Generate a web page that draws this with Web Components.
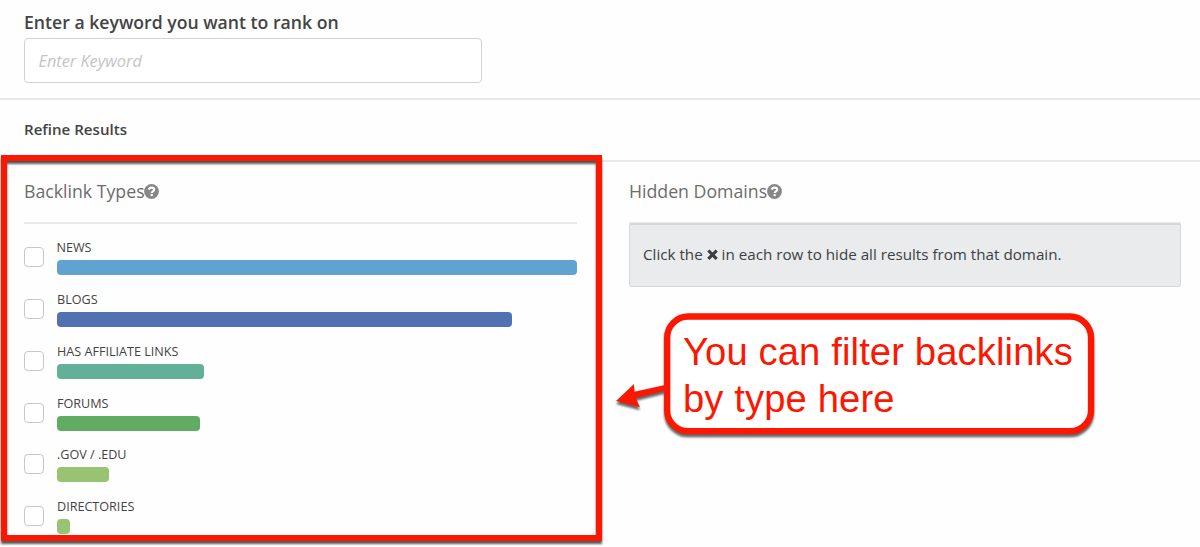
<!DOCTYPE html>
<html lang="en"><head><meta charset="utf-8"><title>Backlinks</title>
<style>html,body{margin:0;height:547px;overflow:hidden;background:#fefefe}</style></head>
<body><backlink-page></backlink-page>
<script>
const define=(name,html,setup)=>customElements.define(name,class extends HTMLElement{
  constructor(){super();this.attachShadow({mode:'open'}).innerHTML=html}
  connectedCallback(){if(setup)setup(this,this.shadowRoot)}
});
define('help-icon',`<style>:host{display:block;width:15px;height:15px;margin:1px 0 0 -.5px}svg{display:block}</style>
<svg width="15" height="15" viewBox="0 0 15 15"><circle cx="7.5" cy="7.5" r="7.4" fill="#878787"/><path d="M4.7 5.7C5.2 4.2 6.2 3.6 7.5 3.6c1.6 0 2.7.8 2.7 2 0 1.8-2.5 1.7-2.5 3.4" fill="none" stroke="#fefefe" stroke-width="2.1"/><rect x="6.6" y="10" width="2.2" height="2.1" fill="#fefefe"/></svg>`);
define('close-icon',`<style>:host{display:inline-block;width:11px;height:11px;vertical-align:0}svg{display:block}</style>
<svg width="11" height="11" viewBox="0 0 11 11"><path d="M2.4 2.6l6.2 6.2M8.6 2.6l-6.2 6.2" stroke="#3c3f42" stroke-width="3.1" stroke-linecap="square"/></svg>`);
define('keyword-field',`<style>:host{display:block;padding:11px 24px 0;height:87px}
.l{font-size:17.65px;font-weight:600;line-height:23px;height:27px;color:#444}
.i{box-sizing:border-box;width:458px;height:45px;border:1.5px solid #d2d2d2;border-radius:4px;padding-left:13.5px;line-height:45px;font-size:16.3px;font-style:italic;color:#c4c4c4;background:#fff}</style>
<div class="l"><span><slot></slot></span></div><div class="i"><span>Enter Keyword</span></div>`);
define('refine-bar',`<style>:host{display:flex;box-sizing:border-box;height:64px;border-top:2px solid #e9e9e9;border-bottom:2px solid #e9e9e9;padding:0 24px 3px;align-items:center;font-size:15.1px;font-weight:600;color:#444}</style><span><slot></slot></span>`);
define('panel-title',`<style>:host{display:flex;box-sizing:border-box;height:62px;border-bottom:2px solid #e9e9e9;padding-bottom:2px;align-items:center;color:#6c6c6c;font-size:17.72px}</style><span><slot></slot></span><help-icon></help-icon>`);
define('type-row',`<style>:host{display:flex;height:51.8px;gap:13px}
.c{box-sizing:border-box;width:20px;height:20px;border:1.3px solid #c6c6cc;border-radius:4px;margin-top:9px;background:#fff}
.m{flex:1}.t{font-size:12.6px;line-height:20.4px;height:22px;color:#444}.b{height:15px;border-radius:4px}</style>
<div class="c"></div><div class="m"><div class="t"><span><slot></slot></span></div><div class="b"></div></div>`,(el,r)=>{const b=r.querySelector('.b');b.style.width=el.getAttribute('size')+'px';b.style.background=el.getAttribute('tint')});
define('info-note',`<style>:host{display:block;box-sizing:border-box;height:64px;border:1.5px solid #d5d8da;border-top-width:2px;border-radius:3px;background:#e9ebed;padding:0 13px;line-height:58px;color:#3c3f42;font-size:15.2px;margin-top:-1px}</style><span><slot></slot></span>`);
define('highlight-frame',`<style>:host{position:absolute;left:1px;top:155.4px;width:600.5px;height:385.6px;box-sizing:border-box;border:6.5px solid #fb1702;filter:drop-shadow(0 3px 1.3px rgba(0,0,0,.65))}</style>`);
define('callout-note',`<style>:host{position:absolute;left:610px;top:305px;width:500px;height:142px}
svg{position:absolute;inset:0;filter:drop-shadow(0 3px 1.3px rgba(0,0,0,.6))}
.t{position:absolute;left:73px;top:23px;font:38.2px/47px "Liberation Sans",Arial,sans-serif;letter-spacing:.12px;color:#fb1702;white-space:nowrap}.t span{display:table}</style>
<svg width="500" height="142"><path d="M6 96L24 79 24.3 86.7 56 79.8V85.5L25.7 93 30 102.3Z" fill="#fb1702"/><rect x="57.2" y="11.5" width="423.8" height="114.7" rx="21" fill="#fff" stroke="#fb1702" stroke-width="6.3"/></svg>
<div class="t"><span>You can filter backlinks</span><span>by type here</span></div>`);
define('backlink-page',`<style>:host{display:block;position:relative;width:1200px;height:547px;overflow:hidden;background:#fefefe;font-family:"Open Sans",sans-serif;white-space:nowrap}
.cols{display:grid;grid-template-columns:553px 552px;column-gap:52px;padding-left:24px}.rows{padding-top:14.3px}</style>
<keyword-field>Enter a keyword you want to rank on</keyword-field>
<refine-bar>Refine Results</refine-bar>
<div class="cols"><section><panel-title>Backlink Types</panel-title><div class="rows">
<type-row size="520.5" tint="#60a3d0">NEWS</type-row><type-row size="455.2" tint="#5271b3">BLOGS</type-row><type-row size="147" tint="#63b099">HAS AFFILIATE LINKS</type-row><type-row size="143.3" tint="#5fac62">FORUMS</type-row><type-row size="52" tint="#98c373">.GOV / .EDU</type-row><type-row size="13" tint="#98c373">DIRECTORIES</type-row></div></section>
<section><panel-title>Hidden Domains</panel-title><info-note>Click the <close-icon></close-icon> in each row to hide all results from that domain.</info-note></section></div>
<highlight-frame></highlight-frame><callout-note></callout-note>`);
</script></body></html>
